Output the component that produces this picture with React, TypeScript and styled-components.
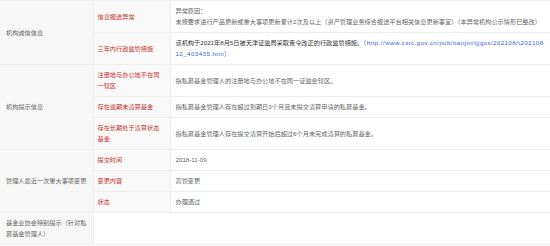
import styled, { createGlobalStyle } from "styled-components";

const GlobalStyle = createGlobalStyle`
  html, body {
    margin: 0;
    padding: 0;
    background: #ffffff;
  }
  body {
    font-family: "Liberation Sans", "Noto Sans CJK SC", sans-serif;
  }
`;

const Table = styled.table`
  width: 550px;
  border-collapse: collapse;
  table-layout: fixed;
  font-size: 6.2px;
  line-height: 11px;
  border-top: 1px solid #f0f0f0;
`;

const Cell = styled.td`
  padding: 4px 5px 5px;
  border-bottom: 1px solid #eeeeee;
  vertical-align: middle;
  word-break: break-all;
`;

const GroupCell = styled(Cell)`
  padding-left: 6px;
  padding-right: 5px;
  background: #f7f7f7;
  color: #666666;
  border-right: 1px solid #eeeeee;
`;

const LabelCell = styled(Cell)`
  padding-left: 4px;
  padding-right: 4px;
  background: #f9f9f9;
  color: #c4302b;
  border-right: 1px solid #eeeeee;
`;

const ValueCell = styled(Cell)`
  padding-left: 5px;
  padding-right: 6px;
  background: #ffffff;
  color: #666666;
`;

const Strong = styled.span`
  color: #333333;
`;

const Link = styled.a`
  color: #3d5fd3;
  text-decoration: none;
  letter-spacing: 0.42px;
`;

interface InfoRow {
  label: string;
  content?: React.ReactNode;
}

interface InfoGroup {
  title: string;
  rows: InfoRow[];
}

const LINK =
  "http://www.csrc.gov.cn/pub/tianjin/tjjgcs/202108/t20210812_403435.htm";

function getGroups(): InfoGroup[] {
  return [
    {
      title: "机构诚信信息",
      rows: [
        {
          label: "信息报送异常",
          content: (
            <>
              异常原因：
              <br />
              未按要求进行产品更新或重大事项更新累计2次及以上（资产管理业务综合报送平台相关信息更新事宜）（本异常机构公示情形已整改）
            </>
          ),
        },
        {
          label: "三年内行政监管措施",
          content: (
            <>
              <Strong>该机构于2021年8月5日被天津证监局采取责令改正的行政监管措施。</Strong>
              <Link href={LINK}>（{LINK}）</Link>
            </>
          ),
        },
      ],
    },
    {
      title: "机构提示信息",
      rows: [
        {
          label: "注册地与办公地不在同一辖区",
          content: "指私募基金管理人的注册地与办公地不在同一证监会辖区。",
        },
        {
          label: "存在逾期未清算基金",
          content: "指私募基金管理人存在超过到期日3个月且未提交清算申请的私募基金。",
        },
        {
          label: "存在长期处于清算状态基金",
          content: "指私募基金管理人存在提交清算开始后超过6个月未完成清算的私募基金。",
        },
      ],
    },
    {
      title: "管理人最近一次重大事项变更",
      rows: [
        { label: "提交时间", content: "2018-11-09" },
        { label: "变更内容", content: "高管变更" },
        { label: "状态", content: "办理通过" },
      ],
    },
  ];
}

export default function App() {
  const groups = getGroups();
  return (
    <>
      <GlobalStyle />
      <Table>
        <colgroup>
          <col style={{ width: 93 }} />
          <col style={{ width: 77 }} />
          <col />
        </colgroup>
        <tbody>
          {groups.map((group) =>
            group.rows.map((row, i) => (
              <tr key={group.title + row.label}>
                {i === 0 && (
                  <GroupCell rowSpan={group.rows.length}>{group.title}</GroupCell>
                )}
                <LabelCell>{row.label}</LabelCell>
                <ValueCell>{row.content}</ValueCell>
              </tr>
            ))
          )}
          <tr>
            <GroupCell>基金业协会特别提示（针对私募基金管理人）</GroupCell>
            <ValueCell colSpan={2} />
          </tr>
        </tbody>
      </Table>
    </>
  );
}
